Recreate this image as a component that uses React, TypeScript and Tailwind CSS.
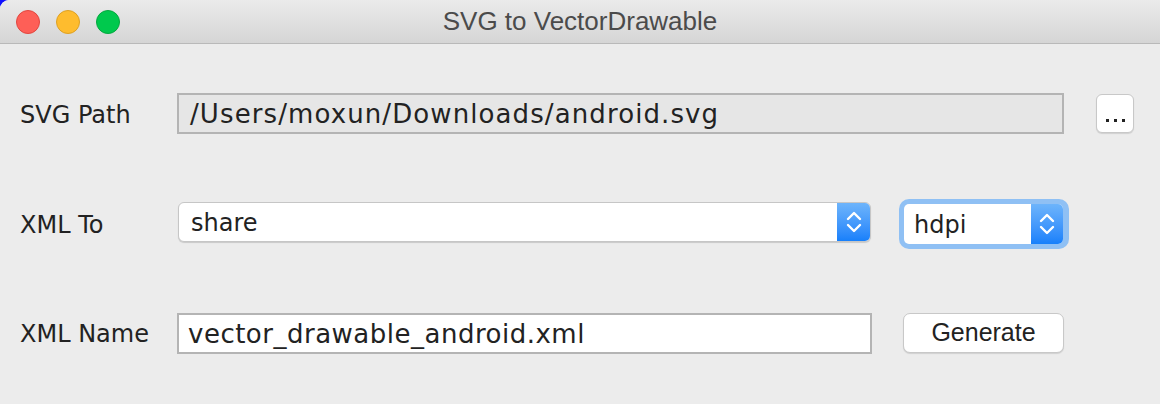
import React from "react";

const Chevrons = () => (
  <svg width="16" height="22" viewBox="0 0 16 22" fill="none" stroke="white" strokeWidth="2.4" strokeLinecap="round" strokeLinejoin="round">
    <path d="M2 8 L8 2 L14 8" />
    <path d="M2 14 L8 20 L14 14" />
  </svg>
);

export default function App() {
  const ui = { fontFamily: '"DejaVu Sans", "Open Sans", sans-serif' };
  const helv = { fontFamily: '"Liberation Sans", Arial, sans-serif' };
  return (
    <div className="w-[1160px] h-[404px] bg-[#1010ff]">
      <div className="w-full h-full bg-[#ececec] rounded-tl-[9px] overflow-hidden flex flex-col">
        {/* Title bar */}
        <div className="relative h-[44px] shrink-0 bg-gradient-to-b from-[#ebebeb] to-[#d5d5d5] border-b border-[#b9b9b9] flex items-center">
          <div className="flex items-center gap-[16px] pl-[16px]">
            <div className="w-[24px] h-[24px] rounded-full bg-[#fe5f57] border border-[#e2463f]" />
            <div className="w-[24px] h-[24px] rounded-full bg-[#febc2e] border border-[#dea123]" />
            <div className="w-[24px] h-[24px] rounded-full bg-[#00c94d] border border-[#05a83f]" />
          </div>
          <div className="absolute inset-0 flex items-center justify-center text-[26px] text-[#4b4b4b]" style={helv}>
            SVG to VectorDrawable
          </div>
        </div>

        {/* Body */}
        <div className="flex flex-col pl-[20px] pt-[49px] text-[#222]" style={ui}>
          {/* Row 1 */}
          <div className="flex items-center h-[41px]">
            <div className="w-[157px] text-[24px] pt-[2px]">SVG Path</div>
            <div className="w-[887px] h-[41px] border-2 border-[#b4b4b4] bg-[#e6e6e6] flex items-center pl-[11px] pt-[2px] text-[26px] tracking-[1.1px]">
              /Users/moxun/Downloads/android.svg
            </div>
            <div className="ml-[32px] w-[38px] h-[39px] bg-white rounded-[6px] border border-[#c8c8c8] shadow-[0_1px_1px_rgba(0,0,0,0.12)] flex items-end justify-center">
              <div className="flex gap-[5px] mb-[10px]">
                <div className="w-[3px] h-[3px] bg-[#222]" />
                <div className="w-[3px] h-[3px] bg-[#222]" />
                <div className="w-[3px] h-[3px] bg-[#222]" />
              </div>
            </div>
          </div>

          {/* Row 2 */}
          <div className="flex items-start h-[50px] mt-[65px]">
            <div className="w-[158px] h-[50px] flex items-center text-[24px] pt-[2px]">XML To</div>
            <div className="mt-[3px] w-[693px] h-[40px] bg-white rounded-[6px] border border-[#c6c6c6] shadow-[0_1px_1px_rgba(0,0,0,0.15)] flex overflow-hidden">
              <div className="flex-1 flex items-center pl-[12px] pt-[2px] text-[24px]">share</div>
              <div className="w-[33px] h-full bg-gradient-to-b from-[#6db4fb] to-[#1680fb] flex items-center justify-center">
                <Chevrons />
              </div>
            </div>
            <div className="ml-[28px] w-[170px] h-[50px] rounded-[10px] bg-[#8fc0f4] p-[5px] pr-[6px]">
              <div className="w-full h-full bg-white rounded-[5px] flex overflow-hidden">
                <div className="flex-1 flex items-center pl-[10px] pt-[1px] text-[24px]">hdpi</div>
                <div className="w-[32px] h-full bg-gradient-to-b from-[#6db4fb] to-[#1680fb] flex items-center justify-center">
                  <Chevrons />
                </div>
              </div>
            </div>
          </div>

          {/* Row 3 */}
          <div className="flex items-center h-[42px] mt-[63px]">
            <div className="w-[157px] text-[24px] pt-[2px]">XML Name</div>
            <div className="w-[695px] h-[41px] border-2 border-[#b4b4b4] bg-white flex items-center pl-[9px] pt-[2px] text-[26px] tracking-[0.5px]">
              vector_drawable_android.xml
            </div>
            <div
              className="ml-[31px] w-[161px] h-[40px] bg-white rounded-[7px] border border-[#c8c8c8] shadow-[0_1px_1px_rgba(0,0,0,0.12)] flex items-center justify-center text-[25px] text-[#222]"
              style={helv}
            >
              Generate
            </div>
          </div>
        </div>
      </div>
    </div>
  );
}
